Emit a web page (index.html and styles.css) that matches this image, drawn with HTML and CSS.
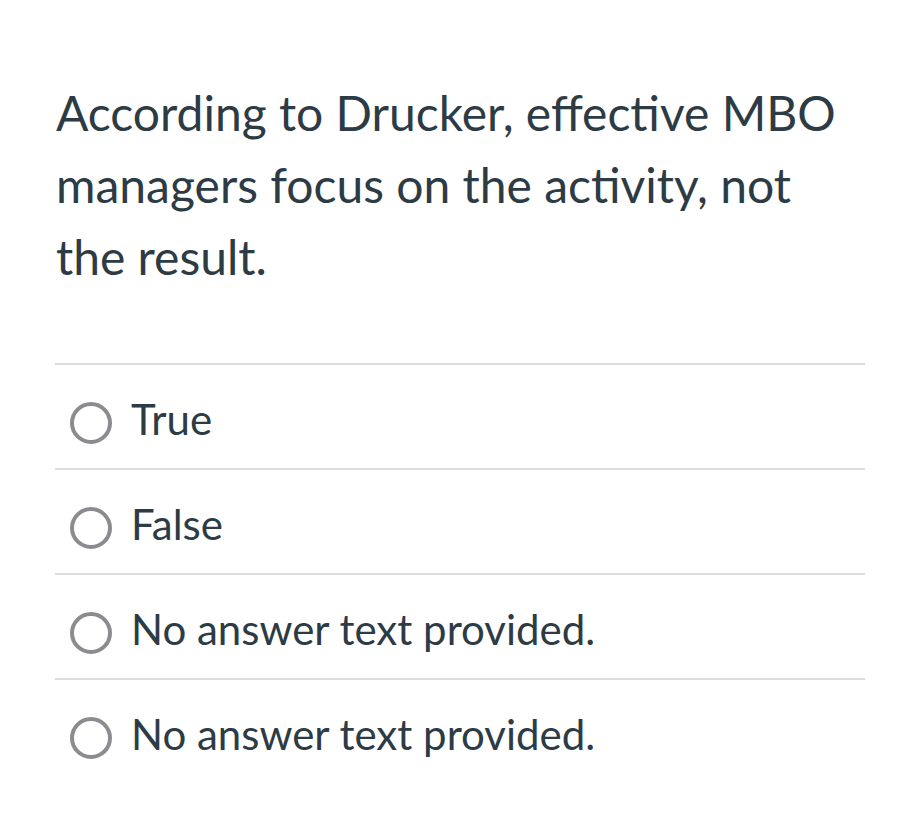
FILE: index.html
```html
<!DOCTYPE html>
<html lang="en">
<head>
<meta charset="utf-8">
<link rel="stylesheet" href="styles.css">
</head>
<body>
<div class="quiz">
  <p class="question">According to Drucker, effective MBO managers focus on the activity, not the result.</p>
  <div class="answers">
    <label class="answer"><span class="radio"></span><span class="text">True</span></label>
    <label class="answer"><span class="radio"></span><span class="text">False</span></label>
    <label class="answer"><span class="radio"></span><span class="text">No answer text provided.</span></label>
    <label class="answer"><span class="radio"></span><span class="text">No answer text provided.</span></label>
  </div>
</div>
</body>
</html>
```

FILE: styles.css
```css
html, body {
  margin: 0;
  padding: 0;
  background: #ffffff;
}
body {
  font-family: Lato, "Open Sans", sans-serif;
  color: #2d3b45;
}
.quiz {
  width: 810px;
  padding: 77px 0 0 55px;
}
.question {
  margin: 0;
  font-size: 48px;
  line-height: 72px;
  padding-left: 1px;
}
.answers {
  margin-top: 70px;
}
.answer {
  display: flex;
  align-items: center;
  border-top: 2px solid #dcdcdc;
  height: 90px;
  padding: 13px 0 0 15px;
}
.radio {
  width: 34px;
  height: 34px;
  border: 4px solid #8c8c90;
  border-radius: 50%;
  flex: none;
}
.text {
  margin-left: 19px;
  margin-bottom: 8px;
  font-size: 42px;
  line-height: 48px;
}
```
